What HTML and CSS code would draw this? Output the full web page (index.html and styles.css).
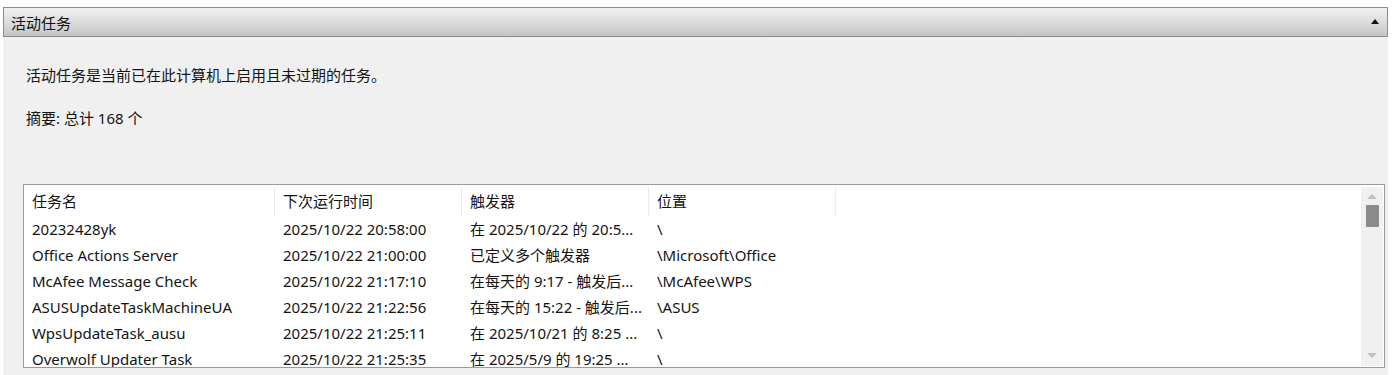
FILE: index.html
```html
<!DOCTYPE html>
<html lang="zh-CN">
  <head>
    <meta charset="UTF-8" />
    <title>活动任务</title>
    <link rel="stylesheet" href="styles.css">
  </head>
  <body>
    <div class="panel">
      <div class="section-header">
        <span class="section-title">活动任务</span>
        <span class="collapse-arrow"></span>
      </div>

      <div class="content">
        <p class="desc">活动任务是当前已在此计算机上启用且未过期的任务。</p>
        <p class="summary">摘要: 总计 168 个</p>

        <div class="task-list">
          <div class="task-grid">
            <div class="cell head">任务名</div>
            <div class="cell head">下次运行时间</div>
            <div class="cell head">触发器</div>
            <div class="cell head">位置</div>
            <div class="cell head last"></div>

            <div class="cell">20232428yk</div>
            <div class="cell">2025/10/22 20:58:00</div>
            <div class="cell">在 2025/10/22 的 20:5...</div>
            <div class="cell">\</div>
            <div class="cell"></div>

            <div class="cell">Office Actions Server</div>
            <div class="cell">2025/10/22 21:00:00</div>
            <div class="cell">已定义多个触发器</div>
            <div class="cell">\Microsoft\Office</div>
            <div class="cell"></div>

            <div class="cell">McAfee Message Check</div>
            <div class="cell">2025/10/22 21:17:10</div>
            <div class="cell">在每天的 9:17 - 触发后...</div>
            <div class="cell">\McAfee\WPS</div>
            <div class="cell"></div>

            <div class="cell">ASUSUpdateTaskMachineUA</div>
            <div class="cell">2025/10/22 21:22:56</div>
            <div class="cell">在每天的 15:22 - 触发后...</div>
            <div class="cell">\ASUS</div>
            <div class="cell"></div>

            <div class="cell">WpsUpdateTask_ausu</div>
            <div class="cell">2025/10/22 21:25:11</div>
            <div class="cell">在 2025/10/21 的 8:25 ...</div>
            <div class="cell">\</div>
            <div class="cell"></div>

            <div class="cell">Overwolf Updater Task</div>
            <div class="cell">2025/10/22 21:25:35</div>
            <div class="cell">在 2025/5/9 的 19:25 ...</div>
            <div class="cell">\</div>
            <div class="cell"></div>
          </div>

          <div class="scrollbar">
            <span class="arrow up"></span>
            <div class="track">
              <div class="thumb"></div>
            </div>
            <span class="arrow down"></span>
          </div>
        </div>
      </div>
    </div>
  </body>
</html>
```

FILE: styles.css
```css
* {
  margin: 0;
  padding: 0;
  box-sizing: border-box;
}
body {
  font-family: "Noto Sans", "Noto Sans CJK SC", sans-serif;
  font-size: 15px;
  color: #141414;
  background: white;
}
.panel {
  margin: 7px 9px 0 3px;
  height: 368px;
  background: #f0f0f0;
}

.section-header {
  height: 30px;
  border: 1px solid #8c8c8c;
  background: linear-gradient(#f0f0f0, #d8d8d8 60%, #c4c4c4);
  display: flex;
  align-items: center;
  justify-content: space-between;
  padding: 0 8px 0 7px;
}

.section-title {
  font-size: 15px;
  color: #111;
}

.collapse-arrow {
  width: 0;
  height: 0;
  border-left: 4px solid transparent;
  border-right: 4px solid transparent;
  border-bottom: 5px solid #111;
  margin-top: -2px;
}

.content {
  padding: 28px 3px 0 20px;
}

.desc,
.summary {
  line-height: 20px;
  padding-left: 3px;
}

.summary {
  margin-top: 23px;
}

.task-list {
  margin-top: 56px;
  height: 184px;
  border: 1px solid #9a9a9a;
  background: white;
  display: flex;
  overflow: hidden;
}

.task-grid {
  flex: 1;
  display: grid;
  grid-template-columns: 251px 187px 187px 187px 1fr;
  grid-template-rows: 31px;
  grid-auto-rows: 26px;
  align-content: start;
}

.cell {
  padding-left: 8px;
  line-height: 26px;
  white-space: nowrap;
  overflow: hidden;
}

.cell.head {
  margin-top: 2px;
  line-height: 29px;
  border-right: 1px solid #ececec;
}

.cell.head.last {
  border-right: none;
}

.scrollbar {
  width: 22px;
  margin: 2px 1px 1px 0;
  background: #f0f0f0;
  display: flex;
  flex-direction: column;
  align-items: center;
}

.arrow {
  width: 0;
  height: 0;
  border-left: 5px solid transparent;
  border-right: 5px solid transparent;
}

.arrow.up {
  margin-top: 7px;
  border-bottom: 5px solid #c2c2c2;
}

.arrow.down {
  margin-bottom: 8px;
  border-top: 5px solid #c2c2c2;
}

.track {
  flex: 1;
  width: 100%;
  display: flex;
  justify-content: center;
}

.thumb {
  width: 13px;
  height: 22px;
  margin-top: 6px;
  background: #8a8a8a;
  border-radius: 1px;
}
```
